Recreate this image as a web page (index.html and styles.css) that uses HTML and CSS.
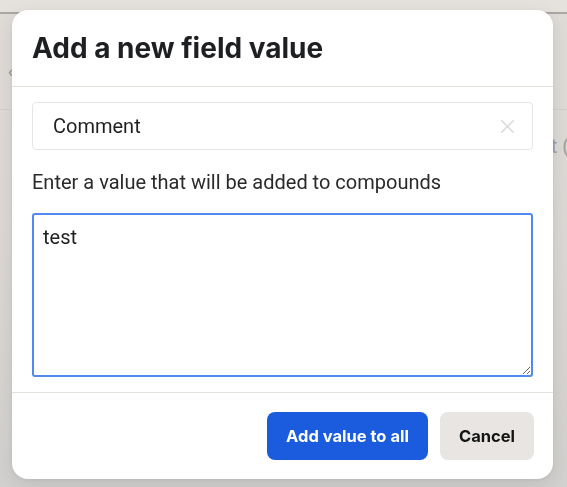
FILE: index.html
```html
<!DOCTYPE html>
<html lang="en">
<head>
<meta charset="utf-8">
<title>Add a new field value</title>
<link rel="stylesheet" href="styles.css">
</head>
<body>
<div class="page">
  <div class="topbar"></div>
  <div class="toolbar"><span class="back">‹</span></div>
  <div class="row"><span class="meta">Select (</span></div>
</div>

<div class="modal" role="dialog" aria-labelledby="dlg-title">
  <div class="modal-header">
    <h1 id="dlg-title" class="modal-title">Add a new field value</h1>
  </div>
  <div class="modal-body">
    <div class="field">
      <span class="field-value">Comment</span>
      <svg class="field-clear" width="13" height="13" viewBox="0 0 13 13" aria-hidden="true">
        <path d="M0.75 0.75 L12.25 12.25 M12.25 0.75 L0.75 12.25" stroke="#d9d9d9" stroke-width="1.5" fill="none" stroke-linecap="round"/>
      </svg>
    </div>
    <p class="hint">Enter a value that will be added to compounds</p>
    <textarea class="value-input">test</textarea>
  </div>
  <div class="modal-footer">
    <button class="btn btn-primary">Add value to all</button>
    <button class="btn btn-secondary">Cancel</button>
  </div>
</div>
</body>
</html>
```
FILE: styles.css
```css
html, body {
  margin: 0;
  padding: 0;
}

body {
  width: 567px;
  height: 487px;
  overflow: hidden;
  background: linear-gradient(180deg, #e0ddd9 0%, #dbd8d5 50%, #d3d1cf 100%);
  font-family: Roboto, "Liberation Sans", sans-serif;
}

.page {
  display: flex;
  flex-direction: column;
}

.topbar {
  height: 12px;
  background: #e5e2de;
  border-bottom: 2px solid #a9a6a3;
}

.toolbar {
  height: 96px;
  background: #dfdcd8;
  border-bottom: 1px solid #d3d0cc;
  display: flex;
  align-items: center;
  padding-left: 8px;
  padding-top: 20px;
  box-sizing: border-box;
}

.back {
  color: #8e8b88;
  font-size: 16px;
  line-height: 1;
}

.row {
  display: flex;
  justify-content: flex-end;
  padding-top: 24px;
  margin-right: -2px;
}

.meta {
  color: #a3a09d;
  font-size: 20px;
  line-height: 24px;
}

.modal {
  position: fixed;
  top: 10px;
  left: 12px;
  width: 541px;
  height: 469px;
  box-sizing: border-box;
  background: #ffffff;
  border-radius: 16px;
  box-shadow: 0 6px 20px rgba(0, 0, 0, 0.10), 0 1px 4px rgba(0, 0, 0, 0.06);
  display: flex;
  flex-direction: column;
}

.modal-header {
  padding: 20px 20px 20px;
  border-bottom: 1px solid #e4e1dd;
}

.modal-title {
  margin: 0;
  font-family: Inter, "Liberation Sans", sans-serif;
  font-weight: 700;
  font-size: 28px;
  line-height: 36px;
  color: #1e1f22;
}

.modal-body {
  padding: 15px 20px 15px;
  display: flex;
  flex-direction: column;
}

.field {
  height: 48px;
  box-sizing: border-box;
  border: 1px solid #e6e6e6;
  border-radius: 4px;
  display: flex;
  align-items: center;
  justify-content: space-between;
  padding: 0 18px 0 20px;
}

.field-value {
  font-size: 20px;
  line-height: 24px;
  color: #1f1f1f;
}

.field-clear {
  display: block;
}

.hint {
  margin: 20px 0 19px;
  font-size: 20px;
  line-height: 24px;
  color: #2a2a2a;
}

.value-input {
  display: block;
  height: 164px;
  box-sizing: border-box;
  border: 2px solid #5289f0;
  border-radius: 3px;
  padding: 10px 9px;
  margin: 0;
  font-family: Roboto, "Liberation Sans", sans-serif;
  font-size: 20px;
  line-height: 24px;
  color: #1f1f1f;
  resize: both;
  outline: none;
  background: #fff;
}

.modal-footer {
  margin-top: auto;
  border-top: 1px solid #e4e1dd;
  padding: 19px 19px 19px;
  display: flex;
  justify-content: flex-end;
  gap: 12px;
}

.btn {
  height: 48px;
  border: none;
  border-radius: 8px;
  font-family: Inter, "Liberation Sans", sans-serif;
  font-weight: 700;
  font-size: 16.5px;
  padding: 0 19px;
  cursor: pointer;
}

.btn-primary {
  background: #1b5cdf;
  color: #ffffff;
}

.btn-secondary {
  background: #e8e5e2;
  color: #141414;
  padding: 0 19px;
}
```
